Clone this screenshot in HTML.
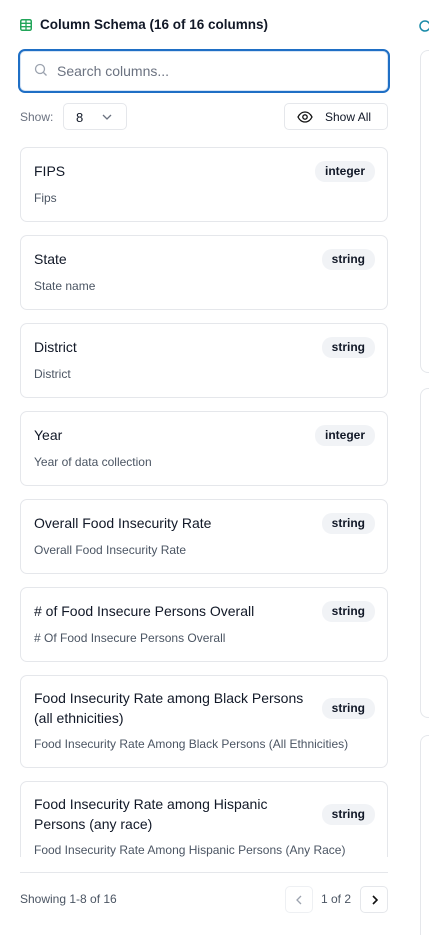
<!DOCTYPE html>
<html style="width:429px;height:935px;overflow:hidden"><head><style>
*{box-sizing:border-box;margin:0;padding:0}
body{width:429px;height:935px;overflow:hidden;background:#fff;font-family:"Liberation Sans",sans-serif;color:#111827;position:relative}
.title{position:absolute;left:20px;top:17px;font-size:13.5px;font-weight:bold;display:flex;align-items:center;gap:8px}
.search{position:absolute;left:18px;top:49px;width:372px;height:44px;border:2px solid #1f6fc5;border-radius:7px;box-shadow:0 0 0 1px #d6e4f5 inset}
.search span{position:absolute;left:37px;top:12px;font-size:14px;color:#6b7280}
.show{position:absolute;left:20px;top:110px;font-size:12px;color:#6b7280}
.sel{position:absolute;left:63px;top:103px;width:64px;height:27px;border:1px solid #e5e7eb;border-radius:5px;font-size:13px;padding:6px 0 0 12px}
.btn{position:absolute;left:284px;top:103px;width:104px;height:27px;border:1px solid #e5e7eb;border-radius:5px;font-size:12px;padding:6px 0 0 40px}
.list{position:absolute;left:0;top:147px;width:400px;height:710px;overflow:hidden}
.card{position:absolute;left:20px;width:368px;border:1px solid #e5e7eb;border-radius:7px;padding:0 13px}
.card h{display:block;font-size:14px;line-height:20px;position:absolute;left:13px;top:13px;width:280px}
.card p{position:absolute;left:13px;font-size:12px;color:#4b5563}
.b{position:absolute;right:12px;top:13px;background:#f1f3f6;border-radius:10px;font-size:12px;font-weight:bold;padding:3px 10px;height:21px}
.foot{position:absolute;left:20px;top:872px;width:368px;border-top:1px solid #e5e7eb}
.r{position:absolute;left:420px;width:9px;border:1px solid #e5e7eb;border-right:none;border-radius:8px 0 0 8px}
</style></head><body>
<div class="title"><svg width="12" height="12" viewBox="0 0 12 12"><rect x="0.75" y="0.75" width="10.5" height="10.5" rx="1.5" fill="none" stroke="#22a55a" stroke-width="1.5"/><path d="M1 4.3H11M1 7.7H11M6 1V11" stroke="#22a55a" stroke-width="1.3"/></svg>Column Schema (16 of 16 columns)</div>
<svg style="position:absolute;left:418px;top:19px" width="11" height="14"><circle cx="7" cy="7" r="5" fill="none" stroke="#1a8ba8" stroke-width="1.5"/></svg>
<div class="search"><svg style="position:absolute;left:14px;top:12px" width="14" height="14" viewBox="0 0 14 14"><circle cx="6" cy="6" r="4.5" fill="none" stroke="#9ca3af" stroke-width="1.3"/><path d="M9.5 9.5L12.5 12.5" stroke="#9ca3af" stroke-width="1.3"/></svg><span>Search columns...</span></div>
<div class="show">Show:</div>
<div class="sel">8<svg style="position:absolute;left:38px;top:10px" width="10" height="6"><path d="M1 1L5 5L9 1" fill="none" stroke="#6b7280" stroke-width="1.3"/></svg></div>
<div class="btn"><svg style="position:absolute;left:12px;top:7px" width="16" height="12" viewBox="0 0 16 12"><path d="M1 6C3 2 5.5 1 8 1S13 2 15 6C13 10 10.5 11 8 11S3 10 1 6Z" fill="none" stroke="#111" stroke-width="1.3"/><circle cx="8" cy="6" r="2.2" fill="none" stroke="#111" stroke-width="1.3"/></svg>Show All</div>
<div class="r" style="top:50px;height:323px"></div>
<div class="r" style="top:388px;height:330px"></div>
<div class="r" style="top:735px;height:200px;border-bottom:none;border-radius:8px 0 0 0"></div>
<div class="list">
<div class="card" style="top:0;height:75px"><h>FIPS</h><span class="b">integer</span><p style="top:43px">Fips</p></div>
<div class="card" style="top:88px;height:75px"><h>State</h><span class="b">string</span><p style="top:43px">State name</p></div>
<div class="card" style="top:176px;height:75px"><h>District</h><span class="b">string</span><p style="top:43px">District</p></div>
<div class="card" style="top:264px;height:75px"><h>Year</h><span class="b">integer</span><p style="top:43px">Year of data collection</p></div>
<div class="card" style="top:352px;height:75px"><h>Overall Food Insecurity Rate</h><span class="b">string</span><p style="top:43px">Overall Food Insecurity Rate</p></div>
<div class="card" style="top:440px;height:75px"><h># of Food Insecure Persons Overall</h><span class="b">string</span><p style="top:43px"># Of Food Insecure Persons Overall</p></div>
<div class="card" style="top:528px;height:93px"><h style="top:12px">Food Insecurity Rate among Black Persons (all ethnicities)</h><span class="b" style="top:22px">string</span><p style="top:61px">Food Insecurity Rate Among Black Persons (All Ethnicities)</p></div>
<div class="card" style="top:634px;height:93px"><h style="top:12px">Food Insecurity Rate among Hispanic Persons (any race)</h><span class="b" style="top:22px">string</span><p style="top:61px">Food Insecurity Rate Among Hispanic Persons (Any Race)</p></div>
</div>
<div class="foot"></div>
<div style="position:absolute;left:20px;top:892px;font-size:12px;color:#4b5563">Showing 1-8 of 16</div>
<div style="position:absolute;left:285px;top:886px;width:28px;height:27px;border:1px solid #eef0f3;border-radius:5px"><svg style="position:absolute;left:10px;top:8px" width="6" height="10"><path d="M5 1L1 5L5 9" fill="none" stroke="#9ca3af" stroke-width="1.3"/></svg></div>
<div style="position:absolute;left:321px;top:892px;font-size:12px;color:#4b5563">1 of 2</div>
<div style="position:absolute;left:360px;top:886px;width:28px;height:27px;border:1px solid #e5e7eb;border-radius:5px"><svg style="position:absolute;left:11px;top:8px" width="6" height="10"><path d="M1 1L5 5L1 9" fill="none" stroke="#111" stroke-width="1.6"/></svg></div>
</body></html>
